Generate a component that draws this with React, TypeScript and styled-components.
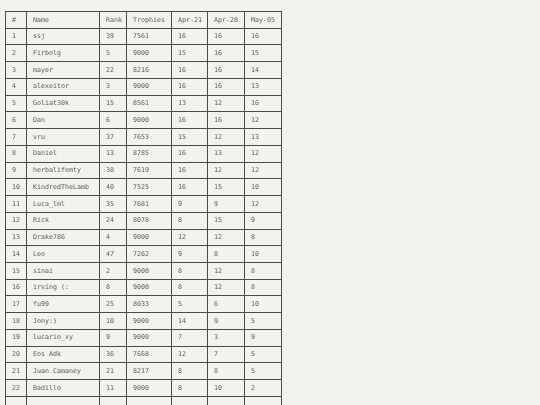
import React, { FC } from 'react'
import styled, { createGlobalStyle } from 'styled-components'

const GlobalStyle = createGlobalStyle`
  html, body {
    margin: 0;
    padding: 0;
    background: #f2f2f0;
    overflow: hidden;
  }
`

const Page = styled.div`
  padding: 11px 0 0 5px;
  height: 405px;
  box-sizing: border-box;
  overflow: hidden;
`

// will-change keeps the tiny text on grayscale antialiasing
const Table = styled.table`
  border-collapse: collapse;
  table-layout: fixed;
  width: 276px;
  font-family: 'DejaVu Sans Mono', 'Liberation Mono', monospace;
  font-size: 6.67px;
  color: #5a5a5a;
  will-change: transform;
`

const Row = styled.tr<{ $head?: boolean }>`
  height: ${(p) => (p.$head ? '16.7px' : '16.74px')};
`

const Cell = styled.td`
  border: 1px solid #4a4a4a;
  padding: 0 0 0 6px;
  text-align: left;
  vertical-align: middle;
  white-space: nowrap;
  font-weight: normal;
  line-height: 1;
`

const HeadCell = styled(Cell).attrs({ as: 'th' })``

const widths = [21, 73, 27, 45, 36, 37, 37]
const headers = ['#', 'Name', 'Rank', 'Trophies', 'Apr-21', 'Apr-28', 'May-05']

const rows: (string | number)[][] = [
  ['ssj', 39, 7561, 16, 16, 16],
  ['Firbolg', 5, 9000, 15, 16, 15],
  ['mayer', 22, 8216, 16, 16, 14],
  ['alexeitor', 3, 9000, 16, 16, 13],
  ['Goliat30k', 15, 8561, 13, 12, 16],
  ['Dan', 6, 9000, 16, 16, 12],
  ['vru', 37, 7653, 15, 12, 13],
  ['Daniel', 13, 8785, 16, 13, 12],
  ['herbalifemty', 38, 7619, 16, 12, 12],
  ['KindredTheLamb', 40, 7525, 16, 15, 10],
  ['Luca_lml', 35, 7681, 9, 9, 12],
  ['Rick', 24, 8078, 8, 15, 9],
  ['Drake786', 4, 9000, 12, 12, 8],
  ['Leo', 47, 7262, 9, 8, 10],
  ['sinai', 2, 9000, 8, 12, 8],
  ['irving (:', 8, 9000, 8, 12, 8],
  ['fu99', 25, 8033, 5, 6, 10],
  ['Jony:)', 10, 9000, 14, 9, 5],
  ['lucario_xy', 9, 9000, 7, 3, 9],
  ['Eos Adk', 36, 7668, 12, 7, 5],
  ['Juan Camaney', 21, 8217, 8, 8, 5],
  ['Badillo', 11, 9000, 8, 10, 2],
  ['', '', '', '', '', ''],
]

const App: FC = () => {
  return (
    <Page>
      <GlobalStyle />
      <Table>
        <colgroup>
          {widths.map((w, i) => (
            <col key={i} style={{ width: w }} />
          ))}
        </colgroup>
        <thead>
          <Row $head>
            {headers.map((h) => (
              <HeadCell key={h}>{h}</HeadCell>
            ))}
          </Row>
        </thead>
        <tbody>
          {rows.map((r, i) => (
            <Row key={i}>
              <Cell>{r[0] === '' ? '' : i + 1}</Cell>
              {r.map((v, j) => (
                <Cell key={j}>{v}</Cell>
              ))}
            </Row>
          ))}
        </tbody>
      </Table>
    </Page>
  )
}

export default App
